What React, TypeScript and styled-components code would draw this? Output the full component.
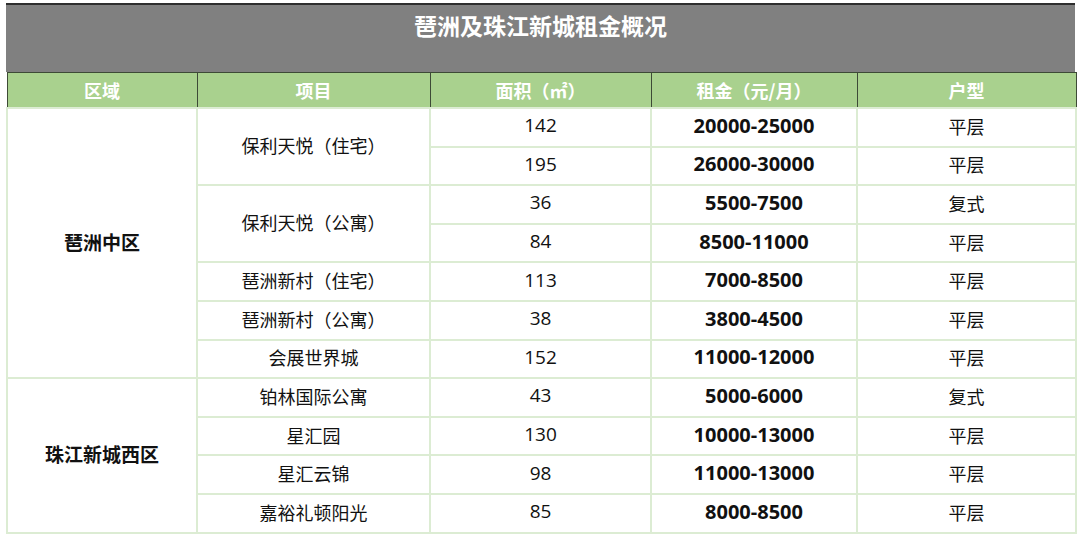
import React from 'react';
import styled, { createGlobalStyle } from 'styled-components';

const GlobalStyle = createGlobalStyle`
  html, body {
    margin: 0;
    padding: 0;
    background: #ffffff;
  }
  body {
    font-family: "Noto Sans", "Noto Sans CJK SC", sans-serif;
  }
`;

type Row = {
  size: number;
  rent: string;
  kind: string;
};

type Group = {
  project: string;
  rows: Row[];
};

type District = {
  name: string;
  groups: Group[];
};

const data: District[] = [
  {
    name: '琶洲中区',
    groups: [
      {
        project: '保利天悦（住宅）',
        rows: [
          { size: 142, rent: '20000-25000', kind: '平层' },
          { size: 195, rent: '26000-30000', kind: '平层' },
        ],
      },
      {
        project: '保利天悦（公寓）',
        rows: [
          { size: 36, rent: '5500-7500', kind: '复式' },
          { size: 84, rent: '8500-11000', kind: '平层' },
        ],
      },
      { project: '琶洲新村（住宅）', rows: [{ size: 113, rent: '7000-8500', kind: '平层' }] },
      { project: '琶洲新村（公寓）', rows: [{ size: 38, rent: '3800-4500', kind: '平层' }] },
      { project: '会展世界城', rows: [{ size: 152, rent: '11000-12000', kind: '平层' }] },
    ],
  },
  {
    name: '珠江新城西区',
    groups: [
      { project: '铂林国际公寓', rows: [{ size: 43, rent: '5000-6000', kind: '复式' }] },
      { project: '星汇园', rows: [{ size: 130, rent: '10000-13000', kind: '平层' }] },
      { project: '星汇云锦', rows: [{ size: 98, rent: '11000-13000', kind: '平层' }] },
      { project: '嘉裕礼顿阳光', rows: [{ size: 85, rent: '8000-8500', kind: '平层' }] },
    ],
  },
];

const columns = ['区域', '项目', '面积（㎡）', '租金（元/月）', '户型'];
const widths = [190, 233, 221, 206, 219];

const Page = styled.div`
  padding: 3px 5px 0 6px;
  width: 1069px;
`;

const Title = styled.div`
  height: 69px;
  background: #808080;
  border-top: 2px solid #2e2e2e;
  color: #ffffff;
  font-family: "Noto Sans CJK SC", sans-serif;
  font-weight: 700;
  font-size: 23px;
  text-align: center;
  padding-top: 3px;
  box-sizing: border-box;
`;

const Table = styled.table`
  border-collapse: collapse;
  table-layout: fixed;
  width: 1069px;
`;

const HeadCell = styled.th`
  height: 34px;
  padding: 0;
  background: #a9d18e;
  color: #ffffff;
  font-family: "Noto Sans CJK SC", sans-serif;
  font-weight: 700;
  font-size: 18px;
  border: 1.5px solid #3d4a36;
  text-align: center;
`;

const Cell = styled.td<{ $bold?: boolean; $num?: boolean }>`
  height: 33.6px;
  padding: 0 0 3px;
  text-align: center;
  color: #111111;
  font-family: ${(p) =>
    p.$num ? '"Open Sans", "Noto Sans", sans-serif' : '"Noto Sans CJK SC", sans-serif'};
  font-size: ${(p) => (p.$num ? (p.$bold ? '20px' : '19px') : '18px')};
  font-weight: ${(p) => (p.$bold ? 700 : 400)};
  line-height: 1;
  border: 2px solid #dcecd3;
`;

const DistrictCell = styled(Cell)`
  font-size: 19px;
`;

const App = () => {
  return (
    <Page>
      <GlobalStyle />
      <Title>琶洲及珠江新城租金概况</Title>
      <Table>
        <colgroup>
          {widths.map((w, i) => (
            <col key={i} style={{ width: w }} />
          ))}
        </colgroup>
        <thead>
          <tr>
            {columns.map((c) => (
              <HeadCell key={c}>{c}</HeadCell>
            ))}
          </tr>
        </thead>
        <tbody>
          {data.map((d) => {
            const total = d.groups.reduce((n, g) => n + g.rows.length, 0);
            return d.groups.map((g, gi) =>
              g.rows.map((r, ri) => (
                <tr key={`${d.name}-${gi}-${ri}`}>
                  {gi === 0 && ri === 0 && (
                    <DistrictCell rowSpan={total} $bold>
                      {d.name}
                    </DistrictCell>
                  )}
                  {ri === 0 && <Cell rowSpan={g.rows.length}>{g.project}</Cell>}
                  <Cell $num>{r.size}</Cell>
                  <Cell $num $bold>
                    {r.rent}
                  </Cell>
                  <Cell>{r.kind}</Cell>
                </tr>
              ))
            );
          })}
        </tbody>
      </Table>
    </Page>
  );
};

export default App;
